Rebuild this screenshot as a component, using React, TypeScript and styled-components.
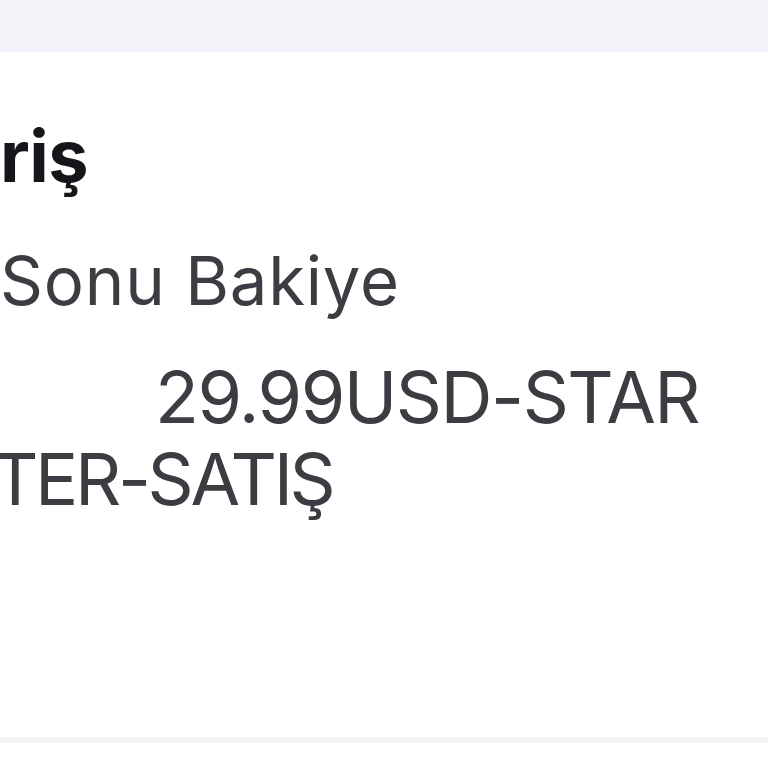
import styled, { createGlobalStyle } from 'styled-components';

const GlobalStyle = createGlobalStyle`
	html, body {
		margin: 0;
		padding: 0;
		background: #ffffff;
		overflow: hidden;
	}
	body {
		font-family: Inter, 'Noto Sans', 'Liberation Sans', sans-serif;
	}
`;

const Page = styled.div`
	width: 768px;
	height: 768px;
	display: flex;
	flex-direction: column;
	background: #ffffff;
	overflow: hidden;
`;

const TopBar = styled.div`
	height: 52px;
	flex-shrink: 0;
	background: #f3f4f9;
	box-shadow: 0 2px 4px rgba(243, 244, 249, 0.9);
`;

const Card = styled.section`
	height: 691px;
	flex-shrink: 0;
	background: #ffffff;
	border-bottom: 6px solid #f3f3f3;
	display: flex;
	flex-direction: column;
	padding-top: 68px;
	box-sizing: border-box;
`;

const Title = styled.h2`
	margin: 0;
	font-size: 72px;
	line-height: 72px;
	font-weight: 700;
	color: #16161a;
	letter-spacing: -0.5px;
`;

const Label = styled.div`
	margin-top: 53px;
	font-size: 67px;
	line-height: 72px;
	font-weight: 400;
	color: #3b3d42;
	letter-spacing: 0.8px;
`;

const Value = styled.div`
	margin-top: 39px;
	display: flex;
	flex-direction: column;
	font-size: 72px;
	line-height: 82px;
	font-weight: 400;
	color: #3b3d42;
`;

const ValueLine = styled.span<{ $indent: number; $tracking: number }>`
	display: block;
	margin-left: ${(p) => p.$indent}px;
	letter-spacing: ${(p) => p.$tracking}px;
	white-space: nowrap;
`;

export default function App() {
	return (
		<>
			<GlobalStyle />
			<Page>
				<TopBar />
				<Card>
					<Title>riş</Title>
					<Label>Sonu Bakiye</Label>
					<Value>
						<ValueLine $indent={155} $tracking={-1.5}>29.99USD-STAR</ValueLine>
						<ValueLine $indent={-8} $tracking={-3.4}>TER-SATIŞ</ValueLine>
					</Value>
				</Card>
			</Page>
		</>
	);
}
